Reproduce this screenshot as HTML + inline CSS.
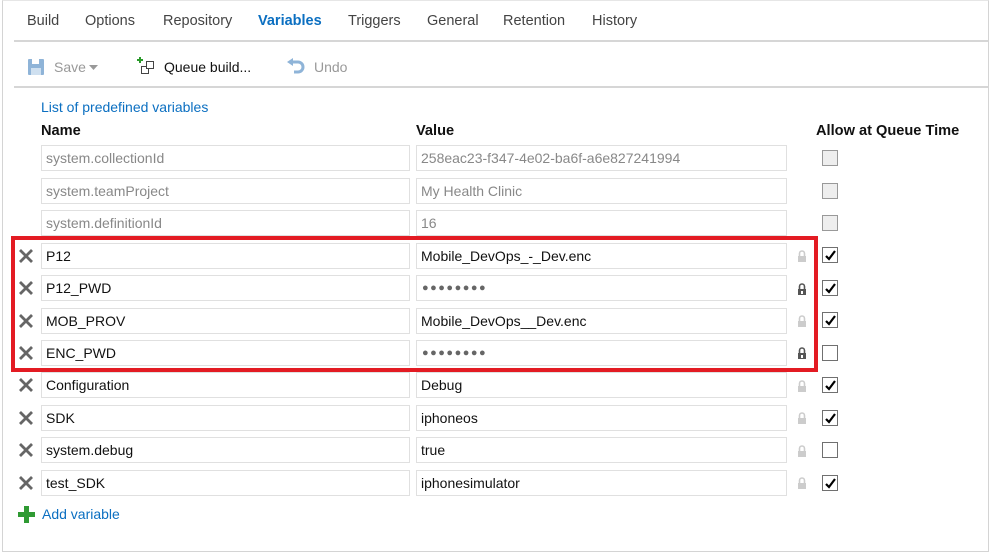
<!DOCTYPE html>
<html><head><meta charset="utf-8"><style>
*{margin:0;padding:0;box-sizing:border-box}
body{width:990px;height:554px;background:#fff;font-family:"Liberation Sans",sans-serif;font-size:14px;color:#222;position:relative;overflow:hidden}
.frame{position:absolute;left:2px;top:0;width:987px;height:552px;border:1px solid #d4d4d4;border-top-color:#e6e6e6}
.a{position:absolute;white-space:nowrap}
.tab{top:13px;color:#444;font-size:14.5px}
.hr{position:absolute;left:14px;right:2px;height:2px;background:#d6d6d6}
.in{position:absolute;height:26px;border:1px solid #e0e0e0;padding-left:4px;line-height:24px;font-size:14px;color:#111;background:#fff}
.ro{color:#888}
.pw{color:#666;font-size:11px;letter-spacing:1.5px;padding-left:5px}
.cb{position:absolute;left:822px;width:16px;height:16px;border:1px solid #707070;background:#fff}
.cb.dis{background:#eee;border-color:#999}
.x{position:absolute;left:17px;width:18px;height:18px}
.lk{position:absolute;left:797px;width:10px;height:12px}
.hd{font-weight:bold;color:#111;font-size:14.6px;top:123px}
</style></head><body>
<div class="frame"></div>
<div class="a tab" style="left:27px">Build</div>
<div class="a tab" style="left:85px">Options</div>
<div class="a tab" style="left:163px">Repository</div>
<div class="a tab" style="left:258px;color:#0b6fc1;font-weight:bold">Variables</div>
<div class="a tab" style="left:348px">Triggers</div>
<div class="a tab" style="left:427px">General</div>
<div class="a tab" style="left:503px">Retention</div>
<div class="a tab" style="left:592px">History</div>
<div class="hr" style="top:40px"></div>
<svg class="a" style="left:28px;top:59px" width="16" height="16"><rect x="0" y="0" width="16" height="16" rx="1" fill="#8fb4d8"/><rect x="4" y="0" width="7" height="5" fill="#fff"/><rect x="3" y="9" width="10" height="7" fill="#cfe0f0"/></svg>
<div class="a" style="left:54px;top:59px;color:#999">Save</div>
<svg class="a" style="left:89px;top:65px" width="9" height="5"><path d="M0 0H9L4.5 5Z" fill="#999"/></svg>
<svg class="a" style="left:137px;top:57px" width="20" height="20"><path d="M3 0v6M0 3h6" stroke="#2a9a2a" stroke-width="2"/><rect x="4.5" y="9.5" width="7" height="7" fill="none" stroke="#444"/><rect x="9.5" y="4.5" width="7" height="7" fill="#fff" stroke="#444"/></svg>
<div class="a" style="left:164px;top:59px;color:#111">Queue build...</div>
<svg class="a" style="left:287px;top:58px" width="18" height="18"><path d="M4 4h7a5 5 0 0 1 0 10H7" fill="none" stroke="#8fb4d8" stroke-width="3"/><path d="M0 4L6 0V8Z" fill="#8fb4d8"/></svg>
<div class="a" style="left:314px;top:59px;color:#999">Undo</div>
<div class="hr" style="top:86px"></div>
<div class="a" style="left:41px;top:99px;color:#0b6fc1">List of predefined variables</div>
<div class="a hd" style="left:41px">Name</div>
<div class="a hd" style="left:416px">Value</div>
<div class="a hd" style="left:816px">Allow at Queue Time</div>

<div class="in ro" style="left:41px;top:145px;width:369px">system.collectionId</div>
<div class="in ro" style="left:416px;top:145px;width:371px">258eac23-f347-4e02-ba6f-a6e827241994</div>
<div class="cb dis" style="top:150px"></div>
<div class="in ro" style="left:41px;top:178px;width:369px">system.teamProject</div>
<div class="in ro" style="left:416px;top:178px;width:371px">My Health Clinic</div>
<div class="cb dis" style="top:183px"></div>
<div class="in ro" style="left:41px;top:210px;width:369px">system.definitionId</div>
<div class="in ro" style="left:416px;top:210px;width:371px">16</div>
<div class="cb dis" style="top:215px"></div>

<svg width="0" height="0" style="position:absolute"><defs>
<g id="xx"><path d="M3 3L15 15M15 3L3 15" stroke="#666" stroke-width="2.8"/></g>
<g id="lo"><path d="M2.5 6V3.5a2.5 2.5 0 0 1 5 0V6" fill="none" stroke="#ccc" stroke-width="1.6"/><rect x="1" y="6" width="8" height="6" fill="#ccc"/></g>
<g id="lc"><path d="M2.5 6V3.5a2.5 2.5 0 0 1 5 0V6" fill="none" stroke="#555" stroke-width="1.6"/><rect x="1" y="6" width="8" height="6" fill="#555"/><rect x="4" y="8" width="2" height="3" fill="#fff"/></g>
<g id="ck"><path d="M3 8l3 3 6-8" fill="none" stroke="#000" stroke-width="2.2"/></g>
</defs></svg>

<svg class="x" style="top:247px"><use href="#xx"/></svg>
<div class="in" style="left:41px;top:243px;width:369px">P12</div>
<div class="in" style="left:416px;top:243px;width:371px">Mobile_DevOps_-_Dev.enc</div>
<svg class="lk" style="top:250px"><use href="#lo"/></svg>
<svg class="cb" style="top:247px"><use href="#ck"/></svg>

<svg class="x" style="top:279px"><use href="#xx"/></svg>
<div class="in" style="left:41px;top:275px;width:369px">P12_PWD</div>
<div class="in pw" style="left:416px;top:275px;width:371px">●●●●●●●●</div>
<svg class="lk" style="top:283px"><use href="#lc"/></svg>
<svg class="cb" style="top:280px"><use href="#ck"/></svg>

<svg class="x" style="top:312px"><use href="#xx"/></svg>
<div class="in" style="left:41px;top:308px;width:369px">MOB_PROV</div>
<div class="in" style="left:416px;top:308px;width:371px">Mobile_DevOps__Dev.enc</div>
<svg class="lk" style="top:315px"><use href="#lo"/></svg>
<svg class="cb" style="top:312px"><use href="#ck"/></svg>

<svg class="x" style="top:344px"><use href="#xx"/></svg>
<div class="in" style="left:41px;top:340px;width:369px">ENC_PWD</div>
<div class="in pw" style="left:416px;top:340px;width:371px">●●●●●●●●</div>
<svg class="lk" style="top:347px"><use href="#lc"/></svg>
<div class="cb" style="top:345px"></div>

<svg class="x" style="top:376px"><use href="#xx"/></svg>
<div class="in" style="left:41px;top:372px;width:369px">Configuration</div>
<div class="in" style="left:416px;top:372px;width:371px">Debug</div>
<svg class="lk" style="top:380px"><use href="#lo"/></svg>
<svg class="cb" style="top:377px"><use href="#ck"/></svg>

<svg class="x" style="top:409px"><use href="#xx"/></svg>
<div class="in" style="left:41px;top:405px;width:369px">SDK</div>
<div class="in" style="left:416px;top:405px;width:371px">iphoneos</div>
<svg class="lk" style="top:412px"><use href="#lo"/></svg>
<svg class="cb" style="top:410px"><use href="#ck"/></svg>

<svg class="x" style="top:441px"><use href="#xx"/></svg>
<div class="in" style="left:41px;top:437px;width:369px">system.debug</div>
<div class="in" style="left:416px;top:437px;width:371px">true</div>
<svg class="lk" style="top:445px"><use href="#lo"/></svg>
<div class="cb" style="top:442px"></div>

<svg class="x" style="top:474px"><use href="#xx"/></svg>
<div class="in" style="left:41px;top:470px;width:369px">test_SDK</div>
<div class="in" style="left:416px;top:470px;width:371px">iphonesimulator</div>
<svg class="lk" style="top:477px"><use href="#lo"/></svg>
<svg class="cb" style="top:475px"><use href="#ck"/></svg>

<svg class="a" style="left:18px;top:506px" width="17" height="17"><path d="M8.5 0v17M0 8.5h17" stroke="#2f9a33" stroke-width="5"/></svg>
<div class="a" style="left:42px;top:506px;color:#0b6fc1">Add variable</div>

<div class="a" style="left:11px;top:236px;width:807px;height:136px;border:4px solid #e31b23"></div>
</body></html>
